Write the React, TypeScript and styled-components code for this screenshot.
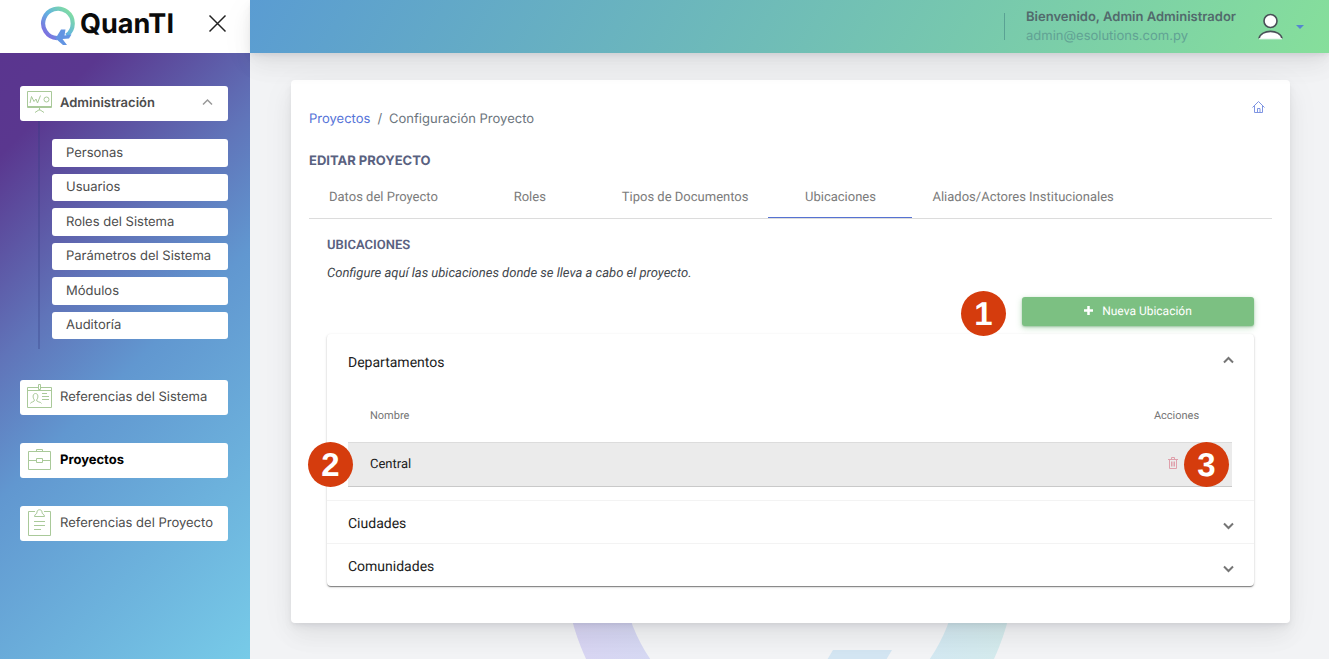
import React from "react";
import styled, { createGlobalStyle, css } from "styled-components";

const INTER = `Inter, "Liberation Sans", sans-serif`;
const ROBOTO = `Roboto, "Liberation Sans", sans-serif`;

const GlobalStyle = createGlobalStyle`
  *, *::before, *::after { box-sizing: border-box; }
  body {
    margin: 0;
    background: #f2f3f5;
    color: #495057;
    font: 400 13px/20px ${INTER};
    text-rendering: geometricPrecision;
  }
  button { font: inherit; color: inherit; border: 0; padding: 0; background: none; cursor: pointer; text-rendering: inherit; }
  h1, h2, p, ul, ol { margin: 0; padding: 0; }
  ul, ol { list-style: none; }
  a { text-decoration: none; }
  svg { display: block; }
`;

const Page = styled.div`
  display: flex;
  flex-direction: column;
  min-height: 100vh;
`;

/* Top bar */

const TopBar = styled.header`
  position: relative;
  z-index: 2;
  display: flex;
  height: 53px;
`;

const Brand = styled.div`
  display: flex;
  align-items: center;
  justify-content: space-between;
  width: 250px;
  flex: none;
  padding: 0 23px 0 40px;
  background: #fff;
`;

const Logo = styled.a`
  display: flex;
  align-items: center;
  gap: 4px;
  height: 48px;
  align-self: flex-start;
  color: #0b0b0b;
  font-size: 27px;
  font-weight: 700;
  line-height: 48px;
`;

const CloseButton = styled.button`
  align-self: flex-start;
  margin-top: 14px;
`;

const Banner = styled.div`
  display: flex;
  flex: 1;
  align-items: center;
  justify-content: flex-end;
  padding-right: 25px;
  background: linear-gradient(120deg, #5a9cd2 0%, #86df9b 100%);
  box-shadow: 0 7px 35px rgba(8, 10, 37, 0.05), 0 15px 22px rgba(8, 10, 37, 0.04),
    0 4px 9px rgba(8, 10, 37, 0.05), 0 2px 3px rgba(8, 10, 37, 0.03);
`;

const UserInfo = styled.div`
  display: flex;
  flex-direction: column;
  justify-content: center;
  height: 27px;
  padding-left: 21px;
  border-left: 1px solid #5aa294;
  line-height: 19px;
`;

const UserName = styled.strong`
  color: #526a6c;
  font-weight: 600;
`;

const UserMail = styled.span`
  color: #61a294;
`;

const UserMenu = styled.button`
  display: flex;
  align-items: center;
  gap: 13px;
  margin-left: 22px;
`;

const Caret = styled.span`
  border: 4px solid transparent;
  border-top-color: #5585cf;
  border-bottom: 0;
`;

/* Sidebar */

const Body = styled.div`
  display: flex;
  flex: 1;
`;

const Sidebar = styled.nav`
  width: 250px;
  flex: none;
  padding: 33px 22px 33px 20px;
  background: linear-gradient(135deg, #5a358f 0%, #5a378f 12%, #6074b9 36%, #6197d0 52%, #77cbe8 100%);
`;

const NavList = styled.ul`
  display: flex;
  flex-direction: column;
  gap: 28px;
`;

const navItem = css`
  display: flex;
  align-items: center;
  width: 100%;
  border-radius: 3px;
  background: #fff;
  color: #4d4d4d;
`;

const NavLink = styled.a<{ $active?: boolean }>`
  ${navItem}
  gap: 8px;
  height: 35px;
  padding: 0 7px 2px;
  ${(p) => p.$active && "color: #000; font-weight: 700;"}
`;

const NavToggle = styled.button`
  ${navItem}
  gap: 8px;
  height: 35px;
  padding: 0 15px 2px 7px;
  font-weight: 600;
  text-align: left;

  span { flex: 1; }
`;

const SubList = styled.ul`
  display: grid;
  grid-auto-rows: 1fr;
  gap: 7px;
  height: 228px;
  margin: 0 0 3px 18px;
  padding: 18px 0 10px 12px;
  border-left: 2px solid rgba(50, 60, 130, 0.3);
`;

const SubLink = styled.a`
  ${navItem}
  height: 100%;
  padding-left: 14px;
`;

/* Content */

const Main = styled.main`
  position: relative;
  flex: 1;
  min-width: 0;
  padding: 27px 39px 36px 41px;
  overflow: hidden;
`;

const Watermark = styled.svg`
  position: absolute;
  top: 286px;
  left: 50%;
  width: 450px;
  margin-left: -225px;
`;

const Card = styled.section`
  position: relative;
  padding: 18px 18px 37px;
  border-radius: 4px;
  background: #fff;
  box-shadow: 0 7px 35px rgba(8, 10, 37, 0.05), 0 15px 22px rgba(8, 10, 37, 0.04),
    0 4px 9px rgba(8, 10, 37, 0.05), 0 2px 3px rgba(8, 10, 37, 0.03);
`;

const CardTop = styled.div`
  display: flex;
  justify-content: space-between;
  padding-right: 7px;
`;

const Breadcrumb = styled.ol`
  display: flex;
  gap: 7px;
  padding-top: 11px;
  color: #6c757d;

  a { color: #5573d8; }
`;

const HomeLink = styled.a`
  padding-top: 2px;
`;

const Title = styled.h1`
  margin: 22px 0 4px;
  color: #596180;
  font-size: 13px;
  font-weight: 700;
  line-height: 20px;
`;

const Tabs = styled.div`
  display: flex;
  border-bottom: 1px solid #dcdcdc;
`;

const Tab = styled.button<{ $active?: boolean }>`
  min-width: 144px;
  height: 43px;
  padding: 4px 20px 0;
  border-bottom: 1px solid ${(p) => (p.$active ? "#5672d2" : "transparent")};
  color: #7b7b7b;
  font: 400 13px/20px ${ROBOTO};
`;

const Panel = styled.div`
  padding: 17px 18px 0;
  font-family: ${ROBOTO};
`;

const Subtitle = styled.h2`
  color: #596180;
  font-size: 13px;
  font-weight: 600;
  line-height: 20px;
`;

const Hint = styled.p`
  margin-top: 8px;
  color: #41464c;
  font-style: italic;
`;

const Actions = styled.div`
  display: flex;
  justify-content: flex-end;
  margin: 13px 0 8px;
`;

const Anchor = styled.div`
  position: relative;
`;

const AddButton = styled.button`
  display: flex;
  align-items: center;
  justify-content: center;
  gap: 9px;
  width: 232px;
  height: 29px;
  padding-bottom: 2px;
  border-radius: 3px;
  background: #7cc082;
  box-shadow: 0 2px 6px rgba(124, 192, 130, 0.45), 0 1px 2px rgba(60, 120, 70, 0.4);
  color: #fff;
  font-size: 12px;
`;

const Badge = styled.span<{ $left?: number; $right?: number; $top: number }>`
  position: absolute;
  z-index: 1;
  top: ${(p) => p.$top}px;
  ${(p) => (p.$left !== undefined ? `left: ${p.$left}px;` : `right: ${p.$right}px;`)}
  width: 45px;
  height: 45px;
  border-radius: 50%;
  background: #d53c0d;
  color: #fff;
  font: 700 33px/45px "Liberation Sans", sans-serif;
  text-align: center;
`;

const Accordion = styled.div`
  border-radius: 4px;
  background: #fff;
  box-shadow: 0 2px 1px -1px rgba(0, 0, 0, 0.25), 0 1px 1px rgba(0, 0, 0, 0.25), 0 1px 3px rgba(0, 0, 0, 0.16);
`;

const Section = styled.section`
  & + & { border-top: 1px solid #f3f3f3; }
`;

const SectionHead = styled.button<{ $open?: boolean }>`
  display: flex;
  align-items: center;
  justify-content: space-between;
  width: 100%;
  height: ${(p) => (p.$open ? 58 : 42)}px;
  padding: ${(p) => (p.$open ? 0 : 4)}px 20px 0 21px;
  color: #212121;
  font: 400 14px/20px ${ROBOTO};

  svg { margin-bottom: ${(p) => (p.$open ? 6 : 0)}px; }
`;

const TableWrap = styled.div`
  padding: 0 22px 13px 21px;
`;

const Table = styled.table`
  width: 100%;
  border-collapse: separate;
  border-spacing: 0;
  text-align: left;

  th, td { padding: 0 22px; }
  th {
    height: 51px;
    padding-bottom: 3px;
    border-bottom: 1px solid #dcdcdc;
    color: #757575;
    font-size: 11px;
    font-weight: 400;
  }
  td {
    position: relative;
    height: 44px;
    border-bottom: 1px solid #c9c9c9;
    background: #ebebeb;
    color: #212121;
    line-height: 20px;
  }
  th:last-child, td:last-child { width: 111px; text-align: center; }
`;

const DeleteButton = styled.button`
  margin: 0 8px 2px 0;
  vertical-align: middle;
`;

/* Icons */

const NavSvg = ({ children }: { children: React.ReactNode }) => (
  <svg width="25" height="27" viewBox="0 0 25 27" fill="none" stroke="#a9c999" strokeWidth="1" aria-hidden="true">
    {children}
  </svg>
);

const BoardIcon = () => (
  <NavSvg>
    <path d="M.5 2.500h24v16H.5zM.5 17.500h24M12.500 18.500v3M8 23.500l4.500-3 4.500 3" />
    <path d="M3 14l1.500-6.500 2.500 5 2-2.500 1.500 4 3-7.500" />
    <circle cx="19.500" cy="10.500" r="2.500" />
  </NavSvg>
);

const IdIcon = () => (
  <NavSvg>
    <path d="M.5 4.500h24v20H.5zM.5 7.500h24" />
    <path d="M11.500 1.500h2v5h-2z" fill="#fff" />
    <path d="M3.500 20.500c0-2 4-1 4-3.500-2-2-2-6.500 1-6.500s3 4.500 1 6.500c0 2.500 4.500 1.500 5 3.500M15 10.500h5M15 13.500h7M15 16.500h7" />
  </NavSvg>
);

const CaseIcon = () => (
  <NavSvg>
    <path d="M1.500 5.500h22v18h-22zM9.500 5.500v-2h6v2M1.500 14.500h8M15.500 14.500h8M9.500 12.500h6v4h-6z" />
  </NavSvg>
);

const ClipboardIcon = () => (
  <NavSvg>
    <path d="M8 2.500H1.500v24h22v-24H17M7 12.500h11M7 16.500h11M7 20.500h7" />
    <path d="M7.500 7.500c0-3 3-2 2.500-4.500 0-3 5-3 5 0-.5 2.500 2.500 1.500 2.500 4.500z" />
  </NavSvg>
);

const LogoMark = () => (
  <svg width="36" height="42" viewBox="0 0 36 42" fill="none" aria-hidden="true">
    <defs>
      <linearGradient id="mark" x1="4" y1="30" x2="28" y2="7" gradientUnits="userSpaceOnUse">
        <stop offset="0" stopColor="#7d6ee0" />
        <stop offset=".5" stopColor="#62b3e0" />
        <stop offset="1" stopColor="#80dca4" />
      </linearGradient>
    </defs>
    <path d="M17 35.200A14.800 14.800 0 1 1 26.500 32.500" stroke="url(#mark)" strokeWidth="4.200" />
    <path d="M25.500 26.500h-4.500l-5.500 9 7.500 6.500h4l-4.500-6 6.500-.5 2.500-4-7 1z" fill="#6294e2" />
  </svg>
);

const UserIcon = () => (
  <svg width="25" height="27" viewBox="0 0 25 27" fill="#fff" stroke="#495057" strokeWidth="1.600" aria-hidden="true">
    <circle cx="12.500" cy="8" r="6.500" />
    <path d="M1 25.500c2-9.500 21-9.500 23 0" />
    <path d="M1 25.800h23" stroke="#fff" strokeWidth="1" />
  </svg>
);

const HomeIcon = () => (
  <svg width="13" height="14" viewBox="0 0 13 14" fill="none" stroke="#7f95e2" strokeWidth="1" aria-hidden="true">
    <path d="M.5 7.500l6-6 6 6M2.500 6v6.500h8V6M5.500 12.500v-4h2.500v4" />
  </svg>
);

const TrashIcon = () => (
  <svg width="10" height="12" viewBox="0 0 10 12" fill="none" stroke="#dfa0ab" strokeWidth="1" aria-hidden="true">
    <path d="M0 2.500h10M3.500 2V.5h3V2M1.500 2.500v9h7v-9M3.500 4.500v5M5 4.500v5M6.500 4.500v5" />
  </svg>
);

const Chevron = ({ up, size = 11, color = "#757575", weight = 2 }: { up?: boolean; size?: number; color?: string; weight?: number }) => (
  <svg width={size} height={size} viewBox="0 0 11 11" fill="none" stroke={color} strokeWidth={weight} aria-hidden="true">
    <path d={up ? "M1 7.500l4.500-4.500 4.500 4.500" : "M1 4.500l4.500 4.500 4.500-4.500"} />
  </svg>
);

const SUB_ITEMS = ["Personas", "Usuarios", "Roles del Sistema", "Parámetros del Sistema", "Módulos", "Auditoría"];
const TABS = ["Datos del Proyecto", "Roles", "Tipos de Documentos", "Ubicaciones", "Aliados/Actores Institucionales"];

export default function App() {
  return (
    <Page>
      <GlobalStyle />
      <TopBar>
        <Brand>
          <Logo href="#">
            <LogoMark />
            QuanTI
          </Logo>
          <CloseButton aria-label="Cerrar menú">
            <svg width="19" height="19" viewBox="0 0 19 19" stroke="#222" strokeWidth="1.500" aria-hidden="true">
              <path d="M1.500 1.500l16 16M17.500 1.500l-16 16" />
            </svg>
          </CloseButton>
        </Brand>
        <Banner>
          <UserInfo>
            <UserName>Bienvenido, Admin Administrador</UserName>
            <UserMail>admin@esolutions.com.py</UserMail>
          </UserInfo>
          <UserMenu aria-label="Menú de usuario">
            <UserIcon />
            <Caret />
          </UserMenu>
        </Banner>
      </TopBar>
      <Body>
        <Sidebar>
          <NavList>
            <li>
              <NavToggle aria-expanded="true">
                <BoardIcon />
                <span>Administración</span>
                <Chevron up size={11} color="#999" weight={1.5} />
              </NavToggle>
              <SubList>
                {SUB_ITEMS.map((item) => (
                  <li key={item}>
                    <SubLink href="#">{item}</SubLink>
                  </li>
                ))}
              </SubList>
            </li>
            <li>
              <NavLink href="#"><IdIcon />Referencias del Sistema</NavLink>
            </li>
            <li>
              <NavLink href="#" $active><CaseIcon />Proyectos</NavLink>
            </li>
            <li>
              <NavLink href="#"><ClipboardIcon />Referencias del Proyecto</NavLink>
            </li>
          </NavList>
        </Sidebar>
        <Main>
          <Watermark viewBox="0 0 450 450" fill="none" aria-hidden="true">
            <defs>
              <linearGradient id="ring" x1="0" y1="300" x2="450" y2="220" gradientUnits="userSpaceOnUse">
                <stop offset="0" stopColor="#d8d4f2" />
                <stop offset=".3" stopColor="#d4dbf3" />
                <stop offset=".75" stopColor="#d2e7f2" />
                <stop offset="1" stopColor="#d4ebea" />
              </linearGradient>
            </defs>
            <circle cx="225" cy="225" r="197" stroke="url(#ring)" strokeWidth="56" />
            <path d="M268 311h59l-60 100h-59z" fill="#d3e5f2" />
          </Watermark>
          <Card>
            <CardTop>
              <Breadcrumb>
                <li><a href="#">Proyectos</a></li>
                <li>/</li>
                <li>Configuración Proyecto</li>
              </Breadcrumb>
              <HomeLink href="#" aria-label="Inicio"><HomeIcon /></HomeLink>
            </CardTop>
            <Title>EDITAR PROYECTO</Title>
            <Tabs role="tablist">
              {TABS.map((tab) => (
                <Tab key={tab} role="tab" aria-selected={tab === "Ubicaciones"} $active={tab === "Ubicaciones"}>
                  {tab}
                </Tab>
              ))}
            </Tabs>
            <Panel role="tabpanel">
              <Subtitle>UBICACIONES</Subtitle>
              <Hint>Configure aquí las ubicaciones donde se lleva a cabo el proyecto.</Hint>
              <Actions>
                <Anchor>
                  <Badge $left={-61} $top={-6}>1</Badge>
                  <AddButton>
                    <svg width="9" height="9" viewBox="0 0 9 9" stroke="#fff" strokeWidth="2.500" aria-hidden="true">
                      <path d="M4.500 0v9M0 4.500h9" />
                    </svg>
                    Nueva Ubicación
                  </AddButton>
                </Anchor>
              </Actions>
              <Accordion>
                <Section>
                  <SectionHead $open aria-expanded="true">
                    Departamentos
                    <Chevron up />
                  </SectionHead>
                  <TableWrap>
                    <Table>
                      <thead>
                        <tr><th>Nombre</th><th>Acciones</th></tr>
                      </thead>
                      <tbody>
                        <tr>
                          <td>
                            <Badge $left={-40} $top={-1}>2</Badge>
                            Central
                          </td>
                          <td>
                            <DeleteButton aria-label="Eliminar Central"><TrashIcon /></DeleteButton>
                            <Badge $right={3} $top={-1}>3</Badge>
                          </td>
                        </tr>
                      </tbody>
                    </Table>
                  </TableWrap>
                </Section>
                <Section>
                  <SectionHead aria-expanded="false">Ciudades<Chevron /></SectionHead>
                </Section>
                <Section>
                  <SectionHead aria-expanded="false">Comunidades<Chevron /></SectionHead>
                </Section>
              </Accordion>
            </Panel>
          </Card>
        </Main>
      </Body>
    </Page>
  );
}
